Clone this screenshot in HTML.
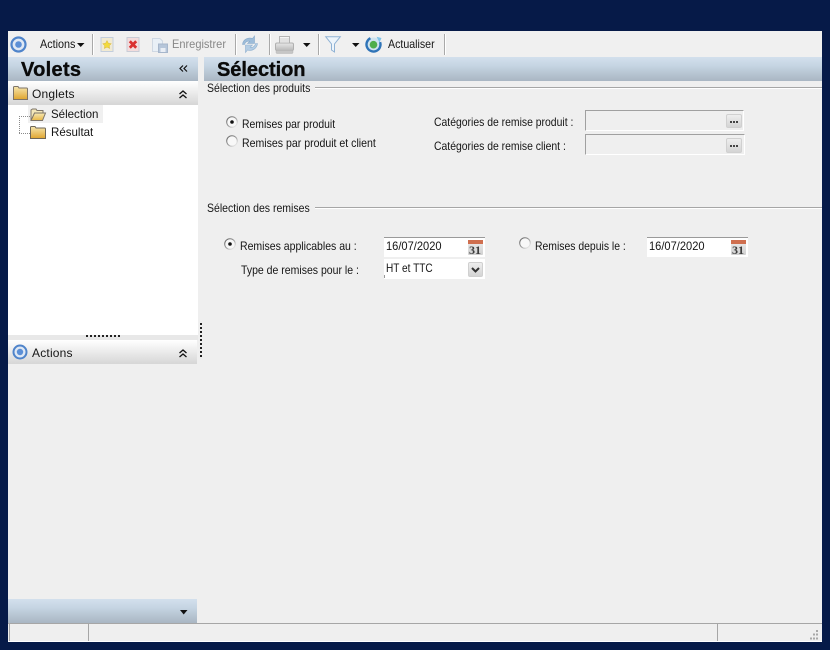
<!DOCTYPE html>
<html lang="fr"><head><meta charset="utf-8"><title>Sélection</title>
<style>
html,body{margin:0;padding:0;width:830px;height:650px;overflow:hidden;background:#061a48}
body{position:relative;font-family:"Liberation Sans",sans-serif;font-size:12px;color:#151515}
div,span.t{position:absolute}
.t{white-space:nowrap;line-height:14px;transform-origin:0 0;transform:scaleX(.867)}
.tb{transform:scaleX(.9)}
.tr{transform:scaleX(.96)}
.pane{transform:none;letter-spacing:.2px}
.sep{width:1px;height:21px;top:34px;background:#a9a9a9;border-right:1px solid #fff}
.head{background:linear-gradient(#d3e0ed,#c6d5e3 35%,#a9b6c3)}
.bar{background:linear-gradient(#fff,#f3f3f3 30%,#d6d6d6)}
.h{font-weight:bold;font-size:20px;line-height:24px;color:#0a0a0a;transform:none;-webkit-text-stroke:.35px #0a0a0a}
.rule{height:1px;background:#a6a6a6;border-bottom:1px solid #fff}
.inp{background:#fff;border-top:1px solid #9a9a9a}
.cat{background:#efefef;border-top:1px solid #a0a0a0;border-left:1px solid #a0a0a0;border-bottom:1px solid #fff;border-right:1px solid #fff}
svg{position:absolute;overflow:visible}
.dots{background:linear-gradient(#eee,#d4d4d4);border:1px solid #d0d0d0;border-radius:2px;box-sizing:border-box}
.cal{font:bold 12px/12px "Liberation Serif",serif;color:#3c3c3c;transform:none}
</style></head><body>
<svg width="0" height="0" style="position:absolute"><defs>
<linearGradient id="fold" x1="0" y1="0" x2="0" y2="1"><stop offset="0" stop-color="#f6e6ae"/><stop offset="1" stop-color="#dfa52f"/></linearGradient>
<linearGradient id="fold2" x1="0" y1="0" x2="0" y2="1"><stop offset="0" stop-color="#f7e9b4"/><stop offset="1" stop-color="#e8b746"/></linearGradient>
<linearGradient id="ring" x1="0" y1="0" x2="1" y2="1"><stop offset="0" stop-color="#5e5e5e"/><stop offset=".5" stop-color="#9a9a9a"/><stop offset="1" stop-color="#fff"/></linearGradient>
<linearGradient id="pr" x1="0" y1="0" x2="0" y2="1"><stop offset="0" stop-color="#e8e8e8"/><stop offset="1" stop-color="#b8b8b8"/></linearGradient>
</defs></svg>
<div id="w" style="left:8px;top:31px;width:814px;height:611px;background:#efefef"></div>

<!-- toolbar -->
<div style="left:8px;top:31px;width:814px;height:26px;background:#f0f0f0"></div>
<svg style="left:10px;top:36px" width="17" height="17"><circle cx="8.500" cy="8.500" r="7" fill="#dfe8f4" stroke="#4f84ca" stroke-width="2.200"/><circle cx="8.500" cy="8.500" r="3.300" fill="#5b8fd6"/></svg>
<span class="t tb" style="left:40px;top:37px">Actions</span>
<svg style="left:77px;top:43px" width="8" height="4"><path d="M0 0H7.500L3.700 4Z" fill="#111"/></svg>
<div class="sep" style="left:92px"></div>
<svg style="left:100px;top:37px" width="14" height="15"><rect x="1" y=".5" width="12" height="14" fill="#f1ead2" stroke="#c3cedd"/><path d="M7 3.500L8.400 6.300 11.300 6.700 9.200 8.700 9.700 11.500 7 10.100 4.300 11.500 4.800 8.700 2.700 6.700 5.600 6.300Z" fill="#f2da3c" stroke="#d9b53a" stroke-width=".5"/></svg>
<svg style="left:126px;top:37px" width="14" height="15"><rect x="1" y=".5" width="12" height="14" fill="#f3dcdc" stroke="#c8ccd6"/><path d="M3.800 4.300L10.200 10.700M10.200 4.300L3.800 10.700" stroke="#d93030" stroke-width="2.800"/></svg>
<svg style="left:152px;top:38px" width="17" height="15"><path d="M.5 .5H8L10.500 3V13.500H.5Z" fill="#e9f0f7" stroke="#cfd8e3"/><rect x="6.500" y="6" width="9" height="8.500" fill="#b6c6da" stroke="#a6b6cb"/><rect x="8.500" y="10" width="5" height="4" fill="#e9eef5"/></svg>
<span class="t tb" style="left:172px;top:37px;color:#878787;transform:scaleX(.92)">Enregistrer</span>
<div class="sep" style="left:235px"></div>
<svg style="left:241px;top:35px" width="18" height="19"><path d="M1.500 9.500C2 4.500 7 2 11.500 3.500L13.500 1V8.500H6.500L8.800 6.300C6.500 5.700 4 7 3.500 9.500Z" fill="#9dbcd9" stroke="#87a9ca" stroke-width=".6"/><path d="M16.500 8.500C16 13.500 11 16.500 6.500 15L4.500 17.500V10H11.500L9.200 12.200C11.500 12.800 14 11.500 14.500 8.500Z" fill="#b4cde4" stroke="#8fb0cf" stroke-width=".6"/></svg>
<div class="sep" style="left:269px"></div>
<svg style="left:275px;top:36px" width="19" height="18"><rect x="4.500" y=".5" width="10" height="6.500" fill="#f6f6f6" stroke="#b4b4b4"/><path d="M5 3h9M5 5h9" stroke="#cfcfcf"/><rect x=".5" y="7" width="18" height="7.500" rx="1.500" fill="url(#pr)" stroke="#b0b0b0"/><rect x="1" y="14.500" width="17" height="3" rx="1" fill="#c6c6c6" stroke="#b5b5b5" stroke-width=".5"/></svg>
<svg style="left:303px;top:43px" width="8" height="4"><path d="M0 0H7.500L3.700 4Z" fill="#111"/></svg>
<div class="sep" style="left:318px"></div>
<svg style="left:325px;top:36px" width="16" height="17"><path d="M.7 .7H15.300L9.500 8V16L6.500 14V8Z" fill="#eef5fb" stroke="#8fb2d4"/></svg>
<svg style="left:352px;top:43px" width="8" height="4"><path d="M0 0H7.500L3.700 4Z" fill="#111"/></svg>
<svg style="left:365px;top:36px" width="17" height="17"><circle cx="8.500" cy="8.500" r="7" fill="#cfe3ef" stroke="#2f74b8" stroke-width="2.400" stroke-dasharray="32 12" transform="rotate(-20 8.500 8.500)"/><circle cx="8.500" cy="8.700" r="3.800" fill="#4fae4a"/><path d="M11.500 .8L16.500 2 14.500 6.500Z" fill="#7fc4ea"/></svg>
<span class="t tb" style="left:388px;top:37px;transform:scaleX(.885)">Actualiser</span>
<div class="sep" style="left:444px"></div>

<!-- left pane -->
<div class="head" style="left:8px;top:57px;width:190px;height:24px"></div>
<span class="t h" style="left:21px;top:58px;letter-spacing:.3px">Volets</span>
<svg style="left:179px;top:65px" width="9" height="8"><path d="M4 .5L1 3.500 4 6.500M8 .5L5 3.500 8 6.500" fill="none" stroke="#111" stroke-width="1.200"/></svg>
<div class="bar" style="left:8px;top:81px;width:190px;height:24px"></div>
<svg style="left:13px;top:86px" width="15" height="14"><path d="M.5 1.500Q.5 .5 1.500 .5H5L6 2H13.500Q14.500 2 14.500 3V13.500H.5Z" fill="url(#fold)" stroke="#7d7468"/></svg>
<span class="t pane" style="left:32px;top:87px">Onglets</span>
<svg style="left:179px;top:90px" width="8" height="9"><path d="M.5 4L4 1 7.500 4M.5 8L4 5 7.500 8" fill="none" stroke="#111" stroke-width="1.300"/></svg>
<div style="left:8px;top:105px;width:190px;height:230px;background:#fff"></div>
<div style="left:28px;top:105px;width:75px;height:18px;background:#f0f0f0"></div>
<div style="left:19px;top:116px;height:0;width:11px;border-top:1px dotted #8a8a8a"></div>
<div style="left:19px;top:116px;width:0;height:17px;border-left:1px dotted #8a8a8a"></div>
<div style="left:19px;top:133px;height:0;width:11px;border-top:1px dotted #8a8a8a"></div>
<svg style="left:30px;top:108px" width="16" height="13"><path d="M1 12.500V2L2.500 1H6L7 2.500H13V5" fill="#f4e7b9" stroke="#7d7468"/><path d="M1 12.500L4.500 5H15.500L12.500 12.500Z" fill="url(#fold2)" stroke="#7d7468"/></svg>
<span class="t tr" style="left:51px;top:107px">Sélection</span>
<svg style="left:30px;top:126px" width="16" height="13"><path d="M.5 1.500Q.5 .5 1.500 .5H5L6 2H14.500Q15.500 2 15.500 3V12.500H.5Z" fill="url(#fold)" stroke="#6d6658"/></svg>
<span class="t tr" style="left:51px;top:125px">Résultat</span>
<div style="left:8px;top:335px;width:190px;height:5px;background:#e8e8e8"></div>
<div style="left:86px;top:335px;width:34px;height:2px;background:repeating-linear-gradient(90deg,#222 0 2px,transparent 2px 4px)"></div>
<div style="left:200px;top:323px;width:2px;height:35px;background:repeating-linear-gradient(#222 0 2px,transparent 2px 4px)"></div>
<div class="bar" style="left:8px;top:340px;width:189px;height:24px"></div>
<svg style="left:12px;top:344px" width="16" height="16"><circle cx="8" cy="8" r="6.500" fill="#dfe8f4" stroke="#4f84ca" stroke-width="2"/><circle cx="8" cy="8" r="3.200" fill="#5b8fd6"/></svg>
<span class="t pane" style="left:32px;top:346px">Actions</span>
<svg style="left:179px;top:349px" width="8" height="9"><path d="M.5 4L4 1 7.500 4M.5 8L4 5 7.500 8" fill="none" stroke="#111" stroke-width="1.300"/></svg>
<div class="head" style="left:8px;top:599px;width:189px;height:24px"></div>
<svg style="left:180px;top:610px" width="8" height="5"><path d="M0 0H7.500L3.700 4.500Z" fill="#111"/></svg>

<!-- main -->
<div class="head" style="left:204px;top:57px;width:618px;height:24px"></div>
<span class="t h" style="left:217px;top:58px;letter-spacing:-.05px">Sélection</span>

<span class="t" style="left:207px;top:81px;transform:scaleX(.875)">Sélection des produits</span>
<div class="rule" style="left:315px;top:87px;width:507px"></div>
<svg style="left:226px;top:116px" width="12" height="12"><circle cx="6" cy="6" r="5.300" fill="#f8f8f8" stroke="url(#ring)"/><circle cx="6" cy="6" r="1.800" fill="#111"/></svg>
<span class="t" style="left:242px;top:117px">Remises par produit</span>
<svg style="left:226px;top:135px" width="12" height="12"><circle cx="6" cy="6" r="5.300" fill="#f8f8f8" stroke="url(#ring)"/></svg>
<span class="t" style="left:242px;top:136px;transform:scaleX(.88)">Remises par produit et client</span>
<span class="t" style="left:434px;top:115px">Catégories de remise produit :</span>
<span class="t" style="left:434px;top:139px">Catégories de remise client :</span>
<div class="cat" style="left:585px;top:110px;width:157px;height:19px"></div>
<div class="cat" style="left:585px;top:134px;width:158px;height:19px"></div>
<div class="dots" style="left:726px;top:114px;width:16px;height:14px"></div>
<div class="dots" style="left:726px;top:138px;width:16px;height:15px"></div>
<div style="left:730px;top:121px;width:8px;height:2px;background:repeating-linear-gradient(90deg,#444 0 2px,transparent 2px 3px)"></div>
<div style="left:730px;top:145px;width:8px;height:2px;background:repeating-linear-gradient(90deg,#444 0 2px,transparent 2px 3px)"></div>

<span class="t" style="left:207px;top:201px;transform:scaleX(.875)">Sélection des remises</span>
<div class="rule" style="left:315px;top:207px;width:507px"></div>
<svg style="left:224px;top:238px" width="12" height="12"><circle cx="6" cy="6" r="5.300" fill="#f8f8f8" stroke="url(#ring)"/><circle cx="6" cy="6" r="1.800" fill="#111"/></svg>
<span class="t" style="left:240px;top:239px;transform:scaleX(.875)">Remises applicables au :</span>
<span class="t" style="left:241px;top:263px;transform:scaleX(.875)">Type de remises pour le :</span>
<div class="inp" style="left:384px;top:237px;width:101px;height:19px"></div>
<span class="t" style="left:386px;top:239px;transform:scaleX(.925)">16/07/2020</span>
<div style="left:468px;top:240px;width:15px;height:15px;background:linear-gradient(#eee,#d0d0d0);border-radius:1px"></div>
<div style="left:468px;top:240px;width:15px;height:4px;background:#cf6f4f"></div>
<span class="t cal" style="left:469px;top:244px">31</span>
<div style="left:384px;top:259px;width:101px;height:20px;background:#fff"></div>
<div style="left:384px;top:275px;width:1px;height:3px;background:#999"></div>
<span class="t" style="left:386px;top:261px;transform:scaleX(.84)">HT et TTC</span>
<div class="dots" style="left:468px;top:262px;width:15px;height:15px"></div>
<svg style="left:471px;top:267px" width="9" height="6"><path d="M1 1L4.500 4.500 8 1" fill="none" stroke="#333" stroke-width="2"/></svg>
<svg style="left:519px;top:237px" width="12" height="12"><circle cx="6" cy="6" r="5.300" fill="#f8f8f8" stroke="url(#ring)"/></svg>
<span class="t" style="left:535px;top:239px">Remises depuis le :</span>
<div class="inp" style="left:647px;top:237px;width:101px;height:19px"></div>
<span class="t" style="left:649px;top:239px;transform:scaleX(.925)">16/07/2020</span>
<div style="left:731px;top:240px;width:15px;height:15px;background:linear-gradient(#eee,#d0d0d0);border-radius:1px"></div>
<div style="left:731px;top:240px;width:15px;height:4px;background:#cf6f4f"></div>
<span class="t cal" style="left:732px;top:244px">31</span>

<!-- status -->
<div style="left:8px;top:623px;width:814px;height:1px;background:#a6a6a6"></div>
<div style="left:8px;top:641px;width:814px;height:1px;background:#fff"></div>
<div style="left:9px;top:624px;width:1px;height:17px;background:#a6a6a6"></div>
<div style="left:88px;top:624px;width:1px;height:17px;background:#a6a6a6"></div>
<div style="left:717px;top:624px;width:1px;height:17px;background:#a6a6a6"></div>
<svg style="left:807px;top:630px" width="12" height="11"><path d="M9 0h2v2H9zM6 3.500h2v2H6zM9 3.500h2v2H9zM3 7.500h2v2H3zM6 7.500h2v2H6zM9 7.500h2v2H9z" fill="#a8a8a8"/></svg>
</body></html>
